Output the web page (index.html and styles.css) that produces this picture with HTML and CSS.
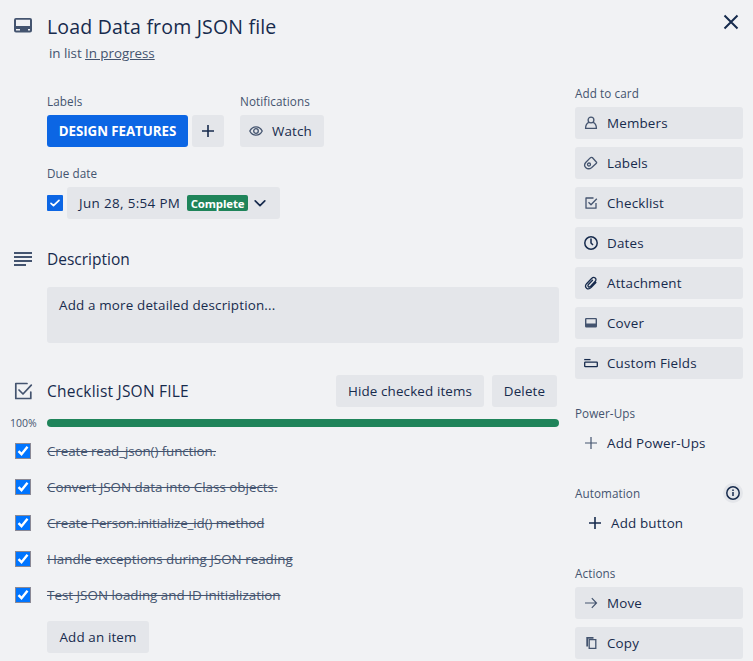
FILE: index.html
```html
<!DOCTYPE html>
<html lang="en">
<head>
<meta charset="utf-8">
<title>Load Data from JSON file</title>
<link rel="stylesheet" href="styles.css">
</head>
<body>
<div class="dialog">
  <header class="header">
    <svg class="header-icon" width="24" height="24" viewBox="0 0 24 24"><path fill="currentColor" fill-rule="evenodd" d="M5 4a2 2 0 0 0-2 2v10.500a2 2 0 0 0 2 2h14a2 2 0 0 0 2-2V6a2 2 0 0 0-2-2H5zm0 1.800h14v6.200H5V5.800zm0 9.200h4v1.500H5v-1.500zm12 0h2v1.500h-2v-1.500z"/></svg>
    <div class="heading">
      <h1 class="t-title">Load Data from JSON file</h1>
      <p class="subtitle">in list <a>In progress</a></p>
    </div>
    <svg class="close" width="24" height="24" viewBox="0 0 24 24" fill="none" stroke="currentColor" stroke-width="2"><path d="M5.500 5.500l13 13m0-13l-13 13"/></svg>
  </header>
  <div class="columns">
    <main class="main">
      <div class="details">
        <section><h3>Labels</h3><div class="row"><span class="label"><b>DESIGN FEATURES</b></span><span class="btn plus"><svg width="16" height="16" viewBox="0 0 16 16" stroke="currentColor" stroke-width="1.600"><path d="M8 2v12M2 8h12"/></svg></span></div></section>
        <section><h3>Notifications</h3><div class="btn watch"><svg width="16" height="16" viewBox="0 0 16 16" fill="none" stroke="currentColor" stroke-width="1.300"><path d="M1.800 8C4.500 2.400 11.500 2.400 14.200 8C11.500 13.600 4.500 13.600 1.800 8z"/><circle cx="8" cy="8" r="2.300"/></svg><span>Watch</span></div></section>
      </div>
      <section class="due"><h3>Due date</h3>
        <div class="row due-row"><span class="check blue"><svg width="16" height="16" viewBox="0 0 16 16" fill="none" stroke="#fff" stroke-width="1.700" stroke-linecap="round" stroke-linejoin="round"><path d="M4 8.300l2.500 2.400L12 5.300"/></svg></span>
        <div class="btn date"><span class="date-text">Jun 28, 5:54 PM</span><span class="badge">Complete</span><svg width="16" height="16" viewBox="0 0 16 16" fill="none" stroke="currentColor" stroke-width="1.700" stroke-linecap="round" stroke-linejoin="round"><path d="M3.200 5.800L8 10.600l4.800-4.800"/></svg></div></div>
      </section>
      <section class="description">
        <div class="section-head"><svg class="head-icon" width="24" height="24" viewBox="0 0 24 24"><path fill="currentColor" d="M3 5h18v2H3zM3 9h18v2H3zM3 13h18v2H3zM3 17h12v2H3z"/></svg><h2 class="t-desc">Description</h2></div>
        <div class="desc-box"><span>Add a more detailed description...</span></div>
      </section>
      <section class="checklist">
        <div class="section-head"><svg class="head-icon" width="24" height="24" viewBox="0 0 24 24" fill="none" stroke="currentColor" stroke-width="1.700" stroke-linecap="round" stroke-linejoin="round"><path d="M16 4.500H4.800v15h15V13M8 11l4 4L20.300 6.200"/></svg><h2 class="t-check">Checklist JSON FILE</h2><span class="btn hide"><span>Hide checked items</span></span><span class="btn delete"><span>Delete</span></span></div>
        <div class="progress"><span class="percent">100%</span><div class="bar"></div></div>
        <ul>
          <li><span class="check native"><svg width="14" height="14" viewBox="0 0 14 14" fill="none" stroke="#fff" stroke-width="2.400"><path d="M2.500 7.200l3 3 6-7.500"/></svg></span><s class="tight">Create read_json() function.</s></li>
          <li><span class="check native"><svg width="14" height="14" viewBox="0 0 14 14" fill="none" stroke="#fff" stroke-width="2.400"><path d="M2.500 7.200l3 3 6-7.500"/></svg></span><s>Convert JSON data into Class objects.</s></li>
          <li><span class="check native"><svg width="14" height="14" viewBox="0 0 14 14" fill="none" stroke="#fff" stroke-width="2.400"><path d="M2.500 7.200l3 3 6-7.500"/></svg></span><s class="tight">Create Person.initialize_id() method</s></li>
          <li><span class="check native"><svg width="14" height="14" viewBox="0 0 14 14" fill="none" stroke="#fff" stroke-width="2.400"><path d="M2.500 7.200l3 3 6-7.500"/></svg></span><s>Handle exceptions during JSON reading</s></li>
          <li><span class="check native"><svg width="14" height="14" viewBox="0 0 14 14" fill="none" stroke="#fff" stroke-width="2.400"><path d="M2.500 7.200l3 3 6-7.500"/></svg></span><s>Test JSON loading and ID initialization</s></li>
        </ul>
        <span class="btn add"><span>Add an item</span></span>
      </section>
    </main>
    <aside class="side">
      <section><h3>Add to card</h3>
        <div class="btn"><svg width="16" height="16" viewBox="0 0 16 16" fill="none" stroke="currentColor" stroke-width="1.300"><circle cx="8" cy="5" r="2.900"/><path d="M5.800 7.300C3.500 8.300 2.600 10.500 2.600 13.300h10.800C13.400 10.500 12.500 8.300 10.200 7.300"/></svg><span>Members</span></div>
        <div class="btn"><svg width="16" height="16" viewBox="0 0 16 16" fill="none" stroke="currentColor" stroke-width="1.300" stroke-linejoin="round"><path d="M2.700 7.500L7 3.100Q8 2.100 9.300 2.500L13.500 7.200Q13.800 7.700 13.400 8.200L8.500 12.700C4.500 15.500-.5 11.500 2.700 7.500z"/><circle cx="6" cy="9.500" r="1.500"/></svg><span>Labels</span></div>
        <div class="btn"><svg width="16" height="16" viewBox="0 0 16 16" fill="none" stroke="currentColor" stroke-width="1.300" stroke-linejoin="round"><path d="M10.500 3H3v10.200h10V8M5.500 7.200L8 9.700l5.800-6"/></svg><span>Checklist</span></div>
        <div class="btn dark"><svg width="16" height="16" viewBox="0 0 16 16" fill="none" stroke="currentColor" stroke-width="1.500"><circle cx="8" cy="8" r="6.200"/><path d="M8 3.500V8l2 2"/></svg><span>Dates</span></div>
        <div class="btn dark"><svg width="16" height="16" viewBox="0 0 16 16" fill="none" stroke="currentColor" stroke-width="1.300" stroke-linecap="round"><path d="M12.900 7.500l-4.600 4.900c-3.500 3.500-7.600-.1-4.700-3.700l5-5.200c2.500-2.500 5.800.1 3.700 2.800l-4.700 5c-1.700 1.700-3.600-.1-2.200-1.800L9.500 5.300"/></svg><span>Attachment</span></div>
        <div class="btn"><svg width="16" height="16" viewBox="0 0 16 16"><path fill="currentColor" fill-rule="evenodd" d="M3.300 3A1.300 1.300 0 0 0 2 4.300v7A1.300 1.300 0 0 0 3.300 12.600h9.400a1.300 1.300 0 0 0 1.300-1.300v-7A1.300 1.300 0 0 0 12.700 3zM3.400 4.200h9.200v4.300H3.400z"/></svg><span>Cover</span></div>
        <div class="btn dark"><svg width="16" height="16" viewBox="0 0 16 16" fill="none" stroke="currentColor" stroke-width="1.300"><path d="M1.200 4.600h6.300"/><rect x="1.700" y="7.200" width="12.600" height="4.400" rx=".6"/></svg><span>Custom Fields</span></div>
      </section>
      <section><h3>Power-Ups</h3><div class="btn ghost"><svg width="16" height="16" viewBox="0 0 16 16" stroke="currentColor" stroke-width="1.200"><path d="M8 2v12M2 8h12"/></svg><span>Add Power-Ups</span></div></section>
      <section><div class="auto-head"><h3>Automation</h3><span class="info"><svg width="16" height="16" viewBox="0 0 16 16" fill="none" stroke="currentColor" stroke-width="1.500"><circle cx="8" cy="8" r="6.200"/><path d="M8 7v4M8 4.500v1.500"/></svg></span></div><div class="btn ghost indent dark"><svg width="16" height="16" viewBox="0 0 16 16" stroke="currentColor" stroke-width="1.600"><path d="M8 2v12M2 8h12"/></svg><span>Add button</span></div></section>
      <section><h3>Actions</h3>
        <div class="btn"><svg width="16" height="16" viewBox="0 0 16 16" fill="none" stroke="currentColor" stroke-width="1.200"><path d="M2 8h11.500M8.800 3.200L13.500 8l-4.700 4.800"/></svg><span>Move</span></div>
        <div class="btn"><svg width="16" height="16" viewBox="0 0 16 16" fill="none" stroke="currentColor" stroke-width="1.300"><path d="M6.200 4.600h6.600v8.800H6.200z"/><path stroke-width="1.800" d="M4.200 11.500V2.800h6.300"/></svg><span>Copy</span></div>
      </section>
    </aside>
  </div>
</div>
</body>
</html>
```

FILE: styles.css
```css
* { box-sizing: border-box; }
body { margin: 0; background: #f1f2f4; color: #172b4d; font: 400 13.4px/20px "Open Sans", "Noto Sans", sans-serif; overflow: hidden; }
h1, h2, h3, p, ul { margin: 0; padding: 0; }
svg { display: block; flex: none; }
.dialog { height: 661px; overflow: hidden; }
.header { height: 84px; display: flex; padding: 14px 10px 0 11px; }
.header-icon { color: #44546f; margin-right: 12px; }
.heading { flex: 1; }
h1 { font-weight: 500; font-size: 19.5px; line-height: 25px; letter-spacing: .18px; }
.subtitle { color: #44546f; margin: 4px 0 0 2px; letter-spacing: -.05px; }
.subtitle a { text-decoration: underline; }
.close { margin-top: -4px; }
.columns { display: flex; justify-content: space-between; padding-right: 10px; }
.main { width: 559px; padding: 8px 0 0 47px; }
.side { width: 168px; }
h3 { font-size: 11.7px; font-weight: 500; line-height: 18px; letter-spacing: .08px; color: #44546f; margin-bottom: 5px; }
.row, .details, .section-head, .progress, li, .auto-head { display: flex; align-items: center; }
.details { gap: 16px; height: 55px; }
.row { gap: 4px; }
.btn { height: 32px; display: flex; align-items: center; background: #e4e6ea; border-radius: 3px; font-weight: 500; letter-spacing: .14px; white-space: nowrap; }
.label { width: 141px; height: 32px; border-radius: 3px; background: #0c66e4; color: #fff; display: flex; justify-content: center; align-items: center; white-space: nowrap; }
.label b { font-weight: 700; font-size: 13.3px; letter-spacing: -.05px; }
.plus { width: 32px; justify-content: center; }
.watch { width: 84px; padding-left: 8px; gap: 8px; }
.watch svg { color: #44546f; }
.due { margin-top: 17px; }
.check { width: 16px; height: 16px; flex: none; }
.blue { background: #0c66e4; border-radius: 1px; }
.date { width: 213px; padding-left: 12px; }
.date-text { width: 108px; letter-spacing: .36px; }
.badge { width: 61px; height: 16px; background: #1f845a; color: #fff; font-weight: 700; font-size: 11.4px; line-height: 17px; letter-spacing: -.12px; text-align: center; border-radius: 2px; margin-right: 4px; }
.description { margin-top: 24px; }
.section-head { height: 32px; }
.head-icon { margin-left: -36px; margin-right: 12px; color: #44546f; }
h2 { font-size: 15.5px; font-weight: 500; line-height: 20px; flex: 1; white-space: nowrap; }
.t-check { letter-spacing: .22px; }
.desc-box { height: 56px; margin-top: 12px; padding: 8px 12px; border-radius: 3px; background: #e4e6ea; font-weight: 500; letter-spacing: .17px; }
.checklist { margin-top: 32px; }
.hide { width: 148px; justify-content: center; margin-right: 8px; }
.delete { width: 65px; justify-content: center; margin-right: 2px; }
.progress { height: 16px; margin-top: 8px; }
.percent { width: 37px; margin-left: -37px; font-size: 10.5px; color: #44546f; }
.bar { flex: 1; height: 8px; border-radius: 4px; background: #1f845a; }
ul { list-style: none; margin-top: 2px; margin-bottom: 8px; }
li { height: 36px; margin-left: -32px; gap: 16px; color: #44546f; white-space: nowrap; }
.tight { letter-spacing: -.1px; }
.native { background: #0075ff; border: 1px solid #8b8994; }
.add { width: 102px; justify-content: center; }
.side .btn { margin-bottom: 8px; padding-left: 8px; gap: 8px; letter-spacing: .17px; }
.side .btn svg { color: #44546f; }
.side .btn.dark svg, .info { color: #172b4d; }
.side .ghost { background: none; }
.side .indent { padding-left: 12px; }
.side section { margin-bottom: 25px; }
.auto-head { height: 23px; justify-content: space-between; }
.info { width: 20px; height: 20px; padding: 2px; border-radius: 50%; background: #e4e6ea; margin-bottom: 5px; }
```
